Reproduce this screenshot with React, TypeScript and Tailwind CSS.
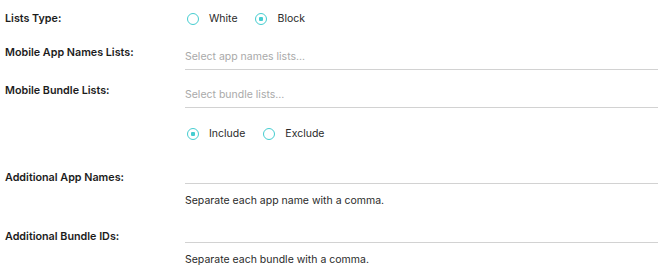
import React from "react";

function Radio({ checked, label }: { checked?: boolean; label: string }) {
  return (
    <div className="flex items-center">
      <span className="ml-[1.5px] flex h-[12px] w-[12px] items-center justify-center rounded-full border-[1.5px] border-[#45cdd0]">
        {checked && <span className="h-[4px] w-[4px] rounded-[1px] bg-[#45cdd0]" />}
      </span>
      <span className="ml-[10.5px] text-[10.5px] leading-[16px] text-[#2a2a2a]">{label}</span>
    </div>
  );
}

export default function App() {
  return (
    <div
      className="w-[658px] h-[272px] bg-white overflow-hidden"
      style={{ fontFamily: "Inter, 'Noto Sans', sans-serif" }}
    >
      {/* Row 1 */}
      <div className="flex h-[37px] items-center">
        <div className="w-[185px] pl-[5px] text-[10.75px] font-semibold leading-[16px] text-[#1c1c1c]">Lists Type:</div>
        <div className="flex items-center gap-[16px]">
          <Radio label="White" />
          <Radio label="Block" checked />
        </div>
      </div>

      {/* Row 2 */}
      <div className="mt-[8px] flex items-start">
        <div className="w-[185px] pl-[5px] text-[10.75px] font-semibold leading-[16px] text-[#1c1c1c]">Mobile App Names Lists:</div>
        <div className="flex-1 h-[25px] border-b border-[#d2d2d2] pt-[4px] pr-[1px] text-[10.5px] leading-[16px] text-[#a9a9a9]">
          Select app names lists...
        </div>
      </div>

      {/* Row 3 */}
      <div className="mt-[13px] flex items-start">
        <div className="w-[185px] pl-[5px] text-[10.75px] font-semibold leading-[16px] text-[#1c1c1c]">Mobile Bundle Lists:</div>
        <div className="flex-1 h-[25px] border-b border-[#d2d2d2] pt-[4px] text-[10.5px] leading-[16px] text-[#a9a9a9]">
          Select bundle lists...
        </div>
      </div>

      {/* Row 4 */}
      <div className="mt-[18px] flex items-center">
        <div className="w-[185px]" />
        <div className="flex items-center gap-[16px]">
          <Radio label="Include" checked />
          <Radio label="Exclude" />
        </div>
      </div>

      {/* Row 5 */}
      <div className="mt-[28px] flex items-start">
        <div className="w-[185px] pl-[5px] text-[10.75px] font-semibold leading-[16px] text-[#1c1c1c]">Additional App Names:</div>
        <div className="flex-1">
          <div className="h-[14px] border-b border-[#d2d2d2]" />
          <div className="mt-[8.5px] text-[10.5px] leading-[16px] text-[#2a2a2a]">Separate each app name with a comma.</div>
        </div>
      </div>

      {/* Row 6 */}
      <div className="mt-[20.5px] flex items-start">
        <div className="w-[185px] pl-[5px] text-[10.75px] font-semibold leading-[16px] text-[#1c1c1c]">Additional Bundle IDs:</div>
        <div className="flex-1">
          <div className="h-[14px] border-b border-[#d2d2d2]" />
          <div className="mt-[9px] text-[10.5px] leading-[16px] text-[#2a2a2a]">Separate each bundle with a comma.</div>
        </div>
      </div>
    </div>
  );
}
